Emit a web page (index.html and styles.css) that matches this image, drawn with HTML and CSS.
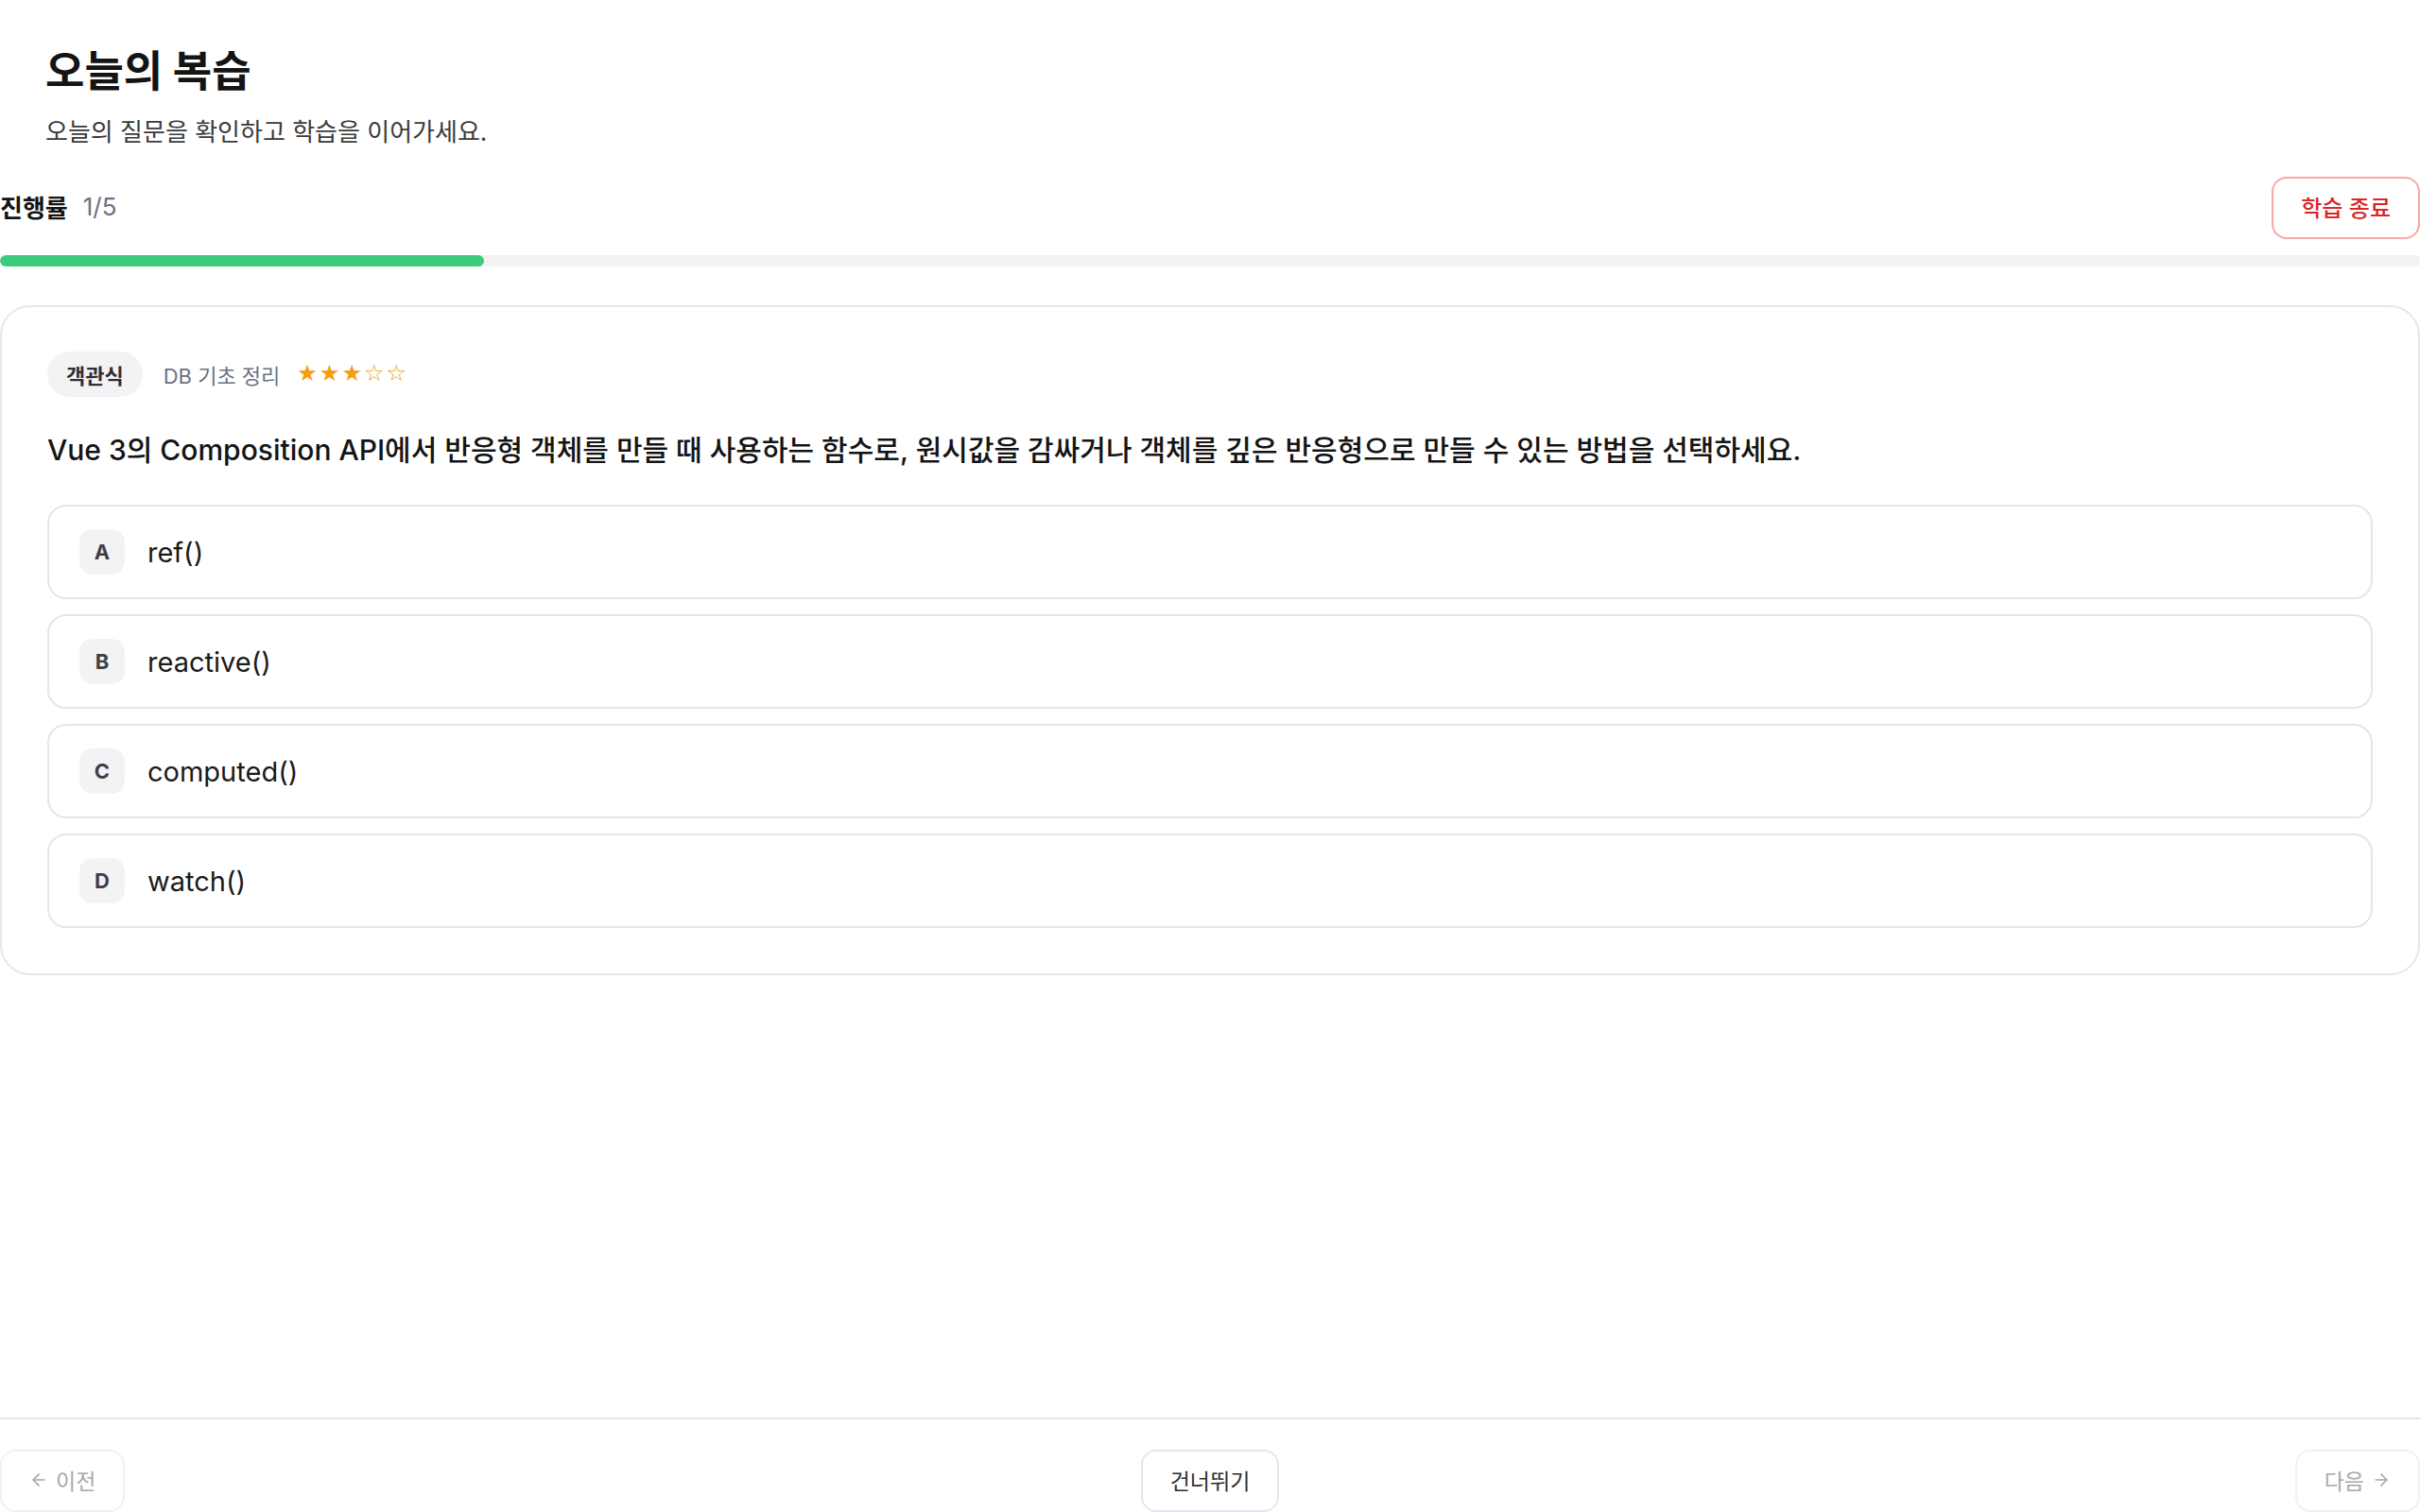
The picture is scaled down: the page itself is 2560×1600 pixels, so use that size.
FILE: index.html
```html
<!DOCTYPE html>
<html lang="ko">
<head>
<meta charset="utf-8">
<title>오늘의 복습</title>
<link rel="stylesheet" href="styles.css">
</head>
<body>
<div class="page">
  <header class="header">
    <h1 class="title">오늘의 복습</h1>
    <p class="subtitle">오늘의 질문을 확인하고 학습을 이어가세요.</p>
  </header>

  <div class="progress-row">
    <div class="progress-label">
      <span class="progress-name">진행률</span>
      <span class="progress-count">1/5</span>
    </div>
    <button class="btn-end">학습 종료</button>
  </div>
  <div class="progress-track"><div class="progress-fill" style="width:20%"></div></div>

  <section class="card">
    <div class="meta">
      <span class="chip">객관식</span>
      <span class="topic">DB 기초 정리</span>
      <span class="stars"><span class="on">★★★</span><span class="off">☆☆</span></span>
    </div>
    <p class="question">Vue 3의 Composition API에서 반응형 객체를 만들 때 사용하는 함수로, 원시값을 감싸거나 객체를 깊은 반응형으로 만들 수 있는 방법을 선택하세요.</p>
    <div class="options">
      <div class="option"><span class="badge">A</span><span class="opt-text">ref()</span></div>
      <div class="option"><span class="badge">B</span><span class="opt-text">reactive()</span></div>
      <div class="option"><span class="badge">C</span><span class="opt-text">computed()</span></div>
      <div class="option"><span class="badge">D</span><span class="opt-text">watch()</span></div>
    </div>
  </section>

  <footer class="footer">
    <button class="btn-nav disabled">
      <svg class="arrow" viewBox="0 0 24 24" width="20" height="20" fill="none" stroke="currentColor" stroke-width="2" stroke-linecap="round" stroke-linejoin="round"><path d="M19 12H5"/><path d="M12 19l-7-7 7-7"/></svg>
      <span>이전</span>
    </button>
    <button class="btn-nav skip">건너뛰기</button>
    <button class="btn-nav disabled">
      <span>다음</span>
      <svg class="arrow" viewBox="0 0 24 24" width="20" height="20" fill="none" stroke="currentColor" stroke-width="2" stroke-linecap="round" stroke-linejoin="round"><path d="M5 12h14"/><path d="M12 5l7 7-7 7"/></svg>
    </button>
  </footer>
</div>
</body>
</html>
```

FILE: styles.css
```css
* { box-sizing: border-box; }

html, body {
  margin: 0;
  padding: 0;
  background: #ffffff;
}

body {
  font-family: "Inter", "Noto Sans CJK KR", sans-serif;
  color: #1a1a1a;
}

.page {
  height: 100vh;
  display: flex;
  flex-direction: column;
  overflow: hidden;
}

.header {
  padding: 46px 48px 0;
}

.title {
  margin: 0;
  font-size: 45px;
  line-height: 60px;
  font-weight: 700;
  color: #141414;
}

.subtitle {
  margin: 16px 0 0;
  font-size: 26px;
  line-height: 36px;
  color: #3a3a3a;
}

.progress-row {
  margin-top: 29px;
  height: 66px;
  display: flex;
  align-items: center;
  justify-content: space-between;
}

.progress-label {
  display: flex;
  align-items: center;
  gap: 16px;
  margin-top: -3px;
}

.progress-name {
  font-size: 26px;
  font-weight: 700;
  color: #141414;
}

.progress-count {
  font-size: 26px;
  color: #6b7280;
}

.btn-end {
  height: 66px;
  padding: 0 29px 3px;
  border: 2px solid #fca5a5;
  border-radius: 16px;
  background: #fff;
  color: #dc2626;
  font-family: inherit;
  font-size: 24px;
  font-weight: 500;
}

.progress-track {
  margin-top: 17px;
  height: 12px;
  border-radius: 6px;
  background: #f2f2f3;
  overflow: hidden;
}

.progress-fill {
  height: 100%;
  border-radius: 6px;
  background: #3ccb7c;
}

.card {
  margin-top: 41px;
  border: 2px solid #e8e8ec;
  border-radius: 32px;
  padding: 47px 48px 48px;
}

.meta {
  display: flex;
  align-items: center;
  height: 48px;
}

.chip {
  height: 48px;
  padding: 0 20px;
  display: inline-flex;
  align-items: center;
  border-radius: 24px;
  background: #f3f3f5;
  font-size: 22px;
  font-weight: 600;
  color: #2f2f33;
}

.topic {
  margin-left: 22px;
  font-size: 22px;
  color: #6b7280;
}

.stars {
  margin-left: 18px;
  margin-top: -3px;
  font-family: "DejaVu Sans", sans-serif;
  font-size: 24px;
  color: #f59e0b;
  letter-spacing: 2px;
}

.question {
  margin: 34px 0 36px;
  font-size: 30px;
  line-height: 44px;
  font-weight: 500;
  color: #141414;
}

.options {
  display: flex;
  flex-direction: column;
  gap: 16px;
}

.option {
  display: flex;
  align-items: center;
  gap: 24px;
  padding: 24px 32px;
  border: 2px solid #e6e6ea;
  border-radius: 20px;
  background: #fff;
}

.badge {
  width: 48px;
  height: 48px;
  flex: none;
  display: inline-flex;
  align-items: center;
  justify-content: center;
  border-radius: 14px;
  background: #f3f3f5;
  font-size: 22px;
  font-weight: 700;
  color: #3f3f46;
}

.opt-text {
  font-size: 29px;
  color: #1a1a1a;
}

.footer {
  margin-top: auto;
  border-top: 2px solid #e6e6ea;
  padding-top: 32px;
  display: flex;
  justify-content: space-between;
  align-items: flex-start;
}

.btn-nav {
  height: 66px;
  padding: 0 29px 2px;
  display: inline-flex;
  align-items: center;
  gap: 8px;
  border: 2px solid #e6e6ea;
  border-radius: 16px;
  background: #fff;
  font-family: inherit;
  font-size: 23px;
  color: #2f2f33;
}

.btn-nav.disabled {
  border-color: #f1f1f3;
  color: #a8a8ab;
}

.arrow {
  display: block;
}
```
